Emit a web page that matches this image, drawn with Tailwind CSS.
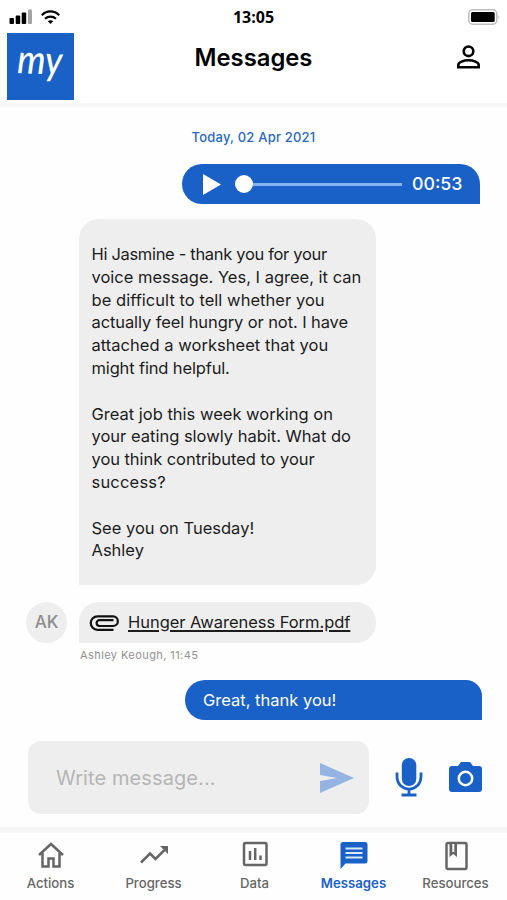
<!DOCTYPE html>
<html lang="en">
<head>
<meta charset="utf-8">
<title>Messages</title>
<script src="https://cdn.jsdelivr.net/npm/@tailwindcss/browser@4"></script>
</head>
<body class="bg-white">
<div class="flex h-[900px] w-[507px] flex-col overflow-hidden bg-[#fefefe] font-['Inter',sans-serif] text-[#1c1c1c]">
  <header class="h-[107px] shrink-0 border-b-[4px] border-[#f7f7f7] bg-white">
    <div class="grid h-[33px] grid-cols-3 items-center pr-[7px] pl-[9px]">
      <div class="flex items-center gap-2">
        <svg class="h-[15px] w-6" viewBox="0 0 24 15"><rect x="0.5" y="9" width="4.5" height="6" rx="1"/><rect x="6.7" y="6.500" width="4.500" height="8.500" rx="1"/><rect x="12.700" y="3.500" width="4.500" height="11.500" rx="1"/><rect x="19" y="0.500" width="4" height="14.500" rx="1" fill="#a3a3a3"/></svg>
        <svg class="h-[14px] w-[19px]" viewBox="0 0 19 14" fill="none" stroke="#000" stroke-width="2.200"><path d="M.8 5.200C5.800.2 13.200.2 18.200 5.200M4 8.800C7 5.900 12 5.900 15 8.800"/><path d="M6.800 11.300Q9.500 9.200 12.200 11.300L9.500 14Z" fill="#000" stroke="none"/></svg>
      </div>
      <div class="-ml-[2px] text-center text-[16px] font-bold text-black font-['Open_Sans',sans-serif]">13:05</div>
      <svg class="h-4 w-8 justify-self-end" viewBox="0 0 32 16"><rect x=".8" y=".8" width="28" height="14.400" rx="4" fill="#fff" stroke="#bdbdbd" stroke-width="1.500"/><rect x="3" y="3" width="23.700" height="10" rx="1.500"/><path d="M30.500 5.500q1.500 2.500 0 5z" fill="#aaa"/></svg>
    </div>
    <div class="grid grid-cols-[67px_1fr_67px] items-start pr-[7px] pl-[7px]">
      <div class="h-[67px] w-[67px] bg-[#1961c7]">
        <svg class="h-[67px] w-[67px]" viewBox="0 0 67 67"><text transform="translate(10 40) scale(1 1.3) rotate(2)" textLength="45" lengthAdjust="spacingAndGlyphs" font-family="Lato" font-style="italic" font-weight="500" font-size="31" fill="#fff">my</text></svg>
      </div>
      <h1 class="mt-[9px] text-center text-[23.800px] leading-8 font-semibold text-black">Messages</h1>
      <svg class="mt-[12px] mr-[19px] h-6 w-[25px] justify-self-end" viewBox="0 0 25 24" fill="none" stroke="#000" stroke-width="2.600"><circle cx="12.500" cy="6.300" r="4.800"/><path d="M2.300 22.200V20C2.300 17.300 7.500 15.300 12.500 15.300S22.700 17.300 22.700 20V22.200Z"/></svg>
    </div>
  </header>

  <main class="flex flex-1 flex-col">
    <p class="mt-[20px] text-center text-[13px] leading-5 font-medium tracking-[0.200px] text-[#2b68c1]">Today, 02 Apr 2021</p>
    <div class="mt-[17px] mr-[27px] flex h-10 w-[298px] items-center self-end rounded-l-[20px] rounded-tr-[20px] bg-[#1961c7] pr-[17px] pl-[21px] text-white">
      <svg class="h-[21px] w-[18px]" viewBox="0 0 18 21" fill="#fff"><path d="M0 0 18 10.500 0 21z"/></svg>
      <div class="ml-[14px] size-[18px] rounded-full bg-white"></div>
      <div class="h-[3px] w-[149px] bg-[#86b2f0]"></div>
      <span class="ml-[10px] text-[17.800px] font-medium whitespace-nowrap">00:53</span>
    </div>
    <div class="mt-[15px] ml-[79px] flex h-[366px] w-[297px] flex-col gap-[22.800px] rounded-t-[20px] rounded-br-[20px] bg-[#eee] pt-6 pl-[12.500px] text-[16.500px] leading-[22.800px] whitespace-nowrap">
      <p><span class="tracking-[-0.320px]">Hi Jasmine - thank you for your</span><br>voice message. Yes, I agree, it can<br><span class="tracking-[0.040px]">be difficult to tell whether you</span><br><span class="tracking-[-0.100px]">actually feel hungry or not. I have</span><br><span class="tracking-[0.030px]">attached a worksheet that you</span><br><span class="tracking-[-0.150px]">might find helpful.</span></p>
      <p>Great job this week working on<br>your eating slowly habit. What do<br><span class="tracking-[-0.060px]">you think contributed to your</span><br><span class="tracking-[0.200px]">success?</span></p>
      <p>See you on Tuesday!<br>Ashley</p>
    </div>
    <div class="mt-[17px] flex gap-3 pl-[26px]">
      <div class="flex size-[41px] items-center justify-center rounded-full bg-[#eee] text-[17px] font-medium text-[#8d8d8d]">AK</div>
      <div class="flex h-[41px] w-[297px] items-center gap-[9px] rounded-r-[20px] rounded-tl-[20px] bg-[#eee] pl-[10px]">
        <svg class="h-4 w-[30px]" viewBox="0 0 30 16" fill="none" stroke="#111" stroke-width="2.200"><path d="M24.500 14.800H8.500A6.700 6.700 0 0 1 8.500 1.300H24A4.800 4.800 0 0 1 24 11H10.500A2.900 2.900 0 0 1 10.500 5.200H24.500"/></svg>
        <span class="text-[16.500px] tracking-[-0.040px] whitespace-nowrap underline decoration-[1.500px] underline-offset-2">Hunger Awareness Form.pdf</span>
      </div>
    </div>
    <p class="mt-1 ml-[80px] text-[11px] leading-4 tracking-[0.420px] text-[#929292]">Ashley Keough, 11:45</p>
    <div class="mt-[17px] mr-[25px] flex h-10 w-[297px] items-center self-end rounded-l-[20px] rounded-tr-[16px] bg-[#1961c7] pl-[18px] text-[16.500px] text-white">Great, thank you!</div>
    <div class="mt-[21px] flex items-center pl-7">
      <div class="flex h-[73px] w-[341px] items-center justify-between rounded-[13px] bg-[#eee] pr-[15px] pl-7">
        <span class="text-[20px] tracking-[0.100px] text-[#b5b5b5]">Write message...</span>
        <svg class="h-[30px] w-[34px]" viewBox="0 0 34 30" fill="#96b4e2"><path d="M0 0 34 15 0 30V18L17 15 0 12Z"/></svg>
      </div>
      <svg class="-mt-[2px] ml-[26px] h-10 w-7" viewBox="0 0 28 40" fill="none" stroke="#1961c7" stroke-width="2.800"><rect x="6.800" y="1" width="14.500" height="28" rx="7.250" fill="#1961c7" stroke="none"/><path d="M2 15.500V19C2 36.500 26 36.500 26 19V15.500M14 31V38M6.500 38H21.500"/></svg>
      <svg class="-mt-[1px] ml-[26px] h-[30px] w-[33px]" viewBox="0 0 33 30"><path d="M3 4H9L12 0H21L24 4H30Q33 4 33 7V27Q33 30 30 30H3Q0 30 0 27V7Q0 4 3 4Z" fill="#1961c7"/><circle cx="16.500" cy="16.500" r="6.700" fill="none" stroke="#fff" stroke-width="2.500"/></svg>
    </div>
  </main>

  <nav class="grid h-[73px] shrink-0 grid-cols-[101px_105px_97px_101px_103px] border-t-[6px] border-[#f7f7f7] bg-[#fefefe] text-center text-[13.200px] leading-4 font-medium text-[#666]">
    <div class="flex flex-col items-center pt-2"><svg class="h-7 w-7" viewBox="0 0 28 28" fill="none" stroke="#666" stroke-width="2.500"><path d="M2 14 14 3 26 14M5.500 12V25.500H11.500V17.500H16.500V25.500H22.500V12"/></svg><span class="mt-[6px]">Actions</span></div>
    <div class="flex flex-col items-center pt-2"><svg class="h-7 w-7" viewBox="0 0 28 28" fill="none" stroke="#666" stroke-width="2.500"><path d="M1 21.500 10 12.500 15.500 18 26 7.500"/><path d="M20 5H28V13Z" fill="#666" stroke="none"/></svg><span class="mt-[6px]">Progress</span></div>
    <div class="flex flex-col items-center pt-2"><svg class="h-7 w-7" viewBox="0 0 28 28" fill="none" stroke="#666" stroke-width="2.500"><rect x="3" y="2" width="22.500" height="22" rx="1.500"/><path d="M9 10V19M14.200 7V19M19.500 14.500V19"/></svg><span class="mt-[6px]">Data</span></div>
    <div class="flex flex-col items-center pt-2 font-semibold text-[#1961c7]"><svg class="h-7 w-7" viewBox="0 0 28 28"><path d="M3 1H25Q27.500 1 27.500 3.500V20Q27.500 22.500 25 22.500H5.500L.5 28V3.500Q.5 1 3 1Z" fill="#1961c7"/><path d="M5.500 7.500H22.500M5.500 12H22.500M5.500 16.500H22.500" stroke="#dbe8fa" stroke-width="2"/></svg><span class="mt-[6px]">Messages</span></div>
    <div class="flex flex-col items-center pt-2"><svg class="h-7 w-7 overflow-visible" viewBox="0 0 28 28" fill="none" stroke="#666" stroke-width="2.500"><rect x="4.500" y="2" width="20" height="26" rx="1.500"/><path d="M7.500 2V16L11.300 13 15 16V2Z" fill="#666" stroke="none"/><path d="M11.300 3V11" stroke="#fff" stroke-width="2"/></svg><span class="mt-[6px]">Resources</span></div>
  </nav>
</div>
</body>
</html>
